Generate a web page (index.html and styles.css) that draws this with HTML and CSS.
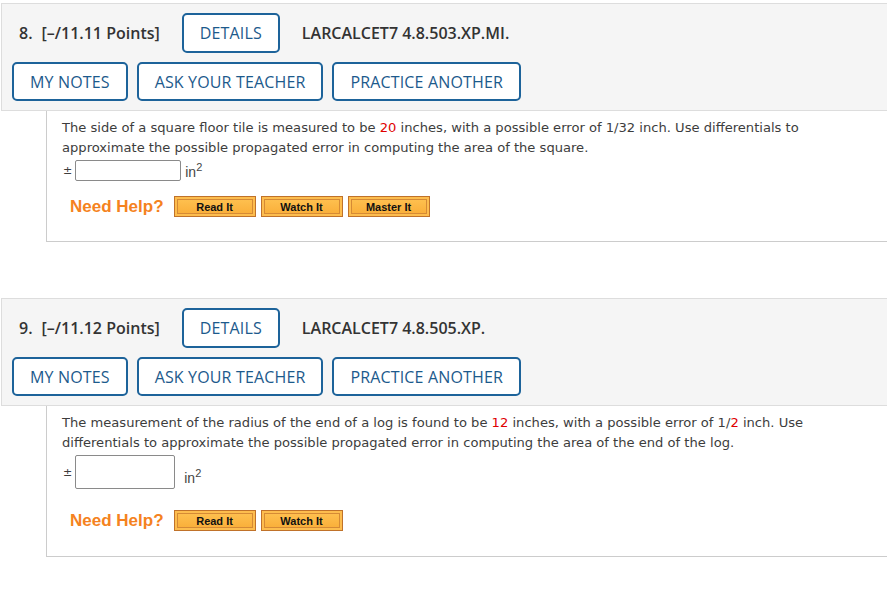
FILE: index.html
```html
<!DOCTYPE html>
<html lang="en">
<head>
  <meta charset="UTF-8">
  <title>Assignment Questions</title>
  <link rel="stylesheet" href="styles.css">
</head>
<body>

  <div class="question q8">
    <div class="q-header">
      <div class="q-row">
        <span class="q-num">8.</span>
        <span class="q-points">[–/11.11 Points]</span>
        <button class="btn">DETAILS</button>
        <span class="q-code">LARCALCET7 4.8.503.XP.MI.</span>
      </div>
      <div class="q-row">
        <button class="btn">MY NOTES</button>
        <button class="btn">ASK YOUR TEACHER</button>
        <button class="btn">PRACTICE ANOTHER</button>
      </div>
    </div>
    <div class="q-body">
      <p class="q-text">The side of a square floor tile is measured to be <span class="red">20</span> inches, with a possible error of 1/32 inch. Use differentials to approximate the possible propagated error in computing the area of the square.</p>
      <div class="answer">
        <span class="pm">±</span>
        <input type="text" class="ans-input">
        <span class="unit">in<sup>2</sup></span>
      </div>
      <div class="help">
        <span class="need-help">Need Help?</span>
        <button class="help-btn">Read It</button>
        <button class="help-btn">Watch It</button>
        <button class="help-btn">Master It</button>
      </div>
    </div>
  </div>

  <div class="question q9">
    <div class="q-header">
      <div class="q-row">
        <span class="q-num">9.</span>
        <span class="q-points">[–/11.12 Points]</span>
        <button class="btn">DETAILS</button>
        <span class="q-code">LARCALCET7 4.8.505.XP.</span>
      </div>
      <div class="q-row">
        <button class="btn">MY NOTES</button>
        <button class="btn">ASK YOUR TEACHER</button>
        <button class="btn">PRACTICE ANOTHER</button>
      </div>
    </div>
    <div class="q-body">
      <p class="q-text">The measurement of the radius of the end of a log is found to be <span class="red">12</span> inches, with a possible error of 1/<span class="red">2</span> inch. Use differentials to approximate the possible propagated error in computing the area of the end of the log.</p>
      <div class="answer tall">
        <span class="pm">±</span>
        <input type="text" class="ans-input">
        <span class="unit">in<sup>2</sup></span>
      </div>
      <div class="help">
        <span class="need-help">Need Help?</span>
        <button class="help-btn">Read It</button>
        <button class="help-btn">Watch It</button>
      </div>
    </div>
  </div>

</body>
</html>
```

FILE: styles.css
```css
body {
  margin: 0;
  padding-top: 3px;
  background: #fff;
  overflow: hidden;
  font-family: "Open Sans", Arial, sans-serif;
  color: #333;
}
.question {
  width: 1000px;
  margin-left: 1px;
}
.q9 {
  margin-top: 56px;
}
.q-header {
  background: #f5f5f5;
  border: 1px solid #ddd;
  padding: 9px 10px 9px 10px;
}
.q-row {
  display: flex;
  align-items: center;
}
.q-row + .q-row {
  margin-top: 9px;
}
.q-num {
  font-size: 16px;
  font-weight: 600;
  margin-left: 7px;
  margin-right: 9px;
}
.q-points {
  font-size: 16px;
  font-weight: 600;
  margin-right: 22px;
}
.q-code {
  font-size: 16px;
  font-weight: 600;
  margin-left: 22px;
}
.btn {
  font-family: "Open Sans", Arial, sans-serif;
  font-size: 16px;
  letter-spacing: 0.15px;
  color: #1c5a8c;
  background: #fff;
  border: 2px solid #1d639a;
  border-radius: 5px;
  height: 39px;
  padding: 0 16px;
  margin-right: 9px;
}
.q-row:first-child .btn {
  height: 40px;
  margin-right: 0;
}
.q-body {
  margin-left: 45px;
  border-left: 1px solid #ccc;
  border-bottom: 1px solid #ccc;
  padding: 7px 15px 24px 15px;
  font-family: "DejaVu Sans", Verdana, sans-serif;
  font-size: 13.1px;
  color: #3d3d3d;
}
.q9 .q-body {
  padding-bottom: 25px;
}
.q-text {
  margin: 0;
  line-height: 20px;
  width: 780px;
}
.red {
  color: #e00000;
}
.answer {
  display: flex;
  align-items: center;
  margin-top: 1px;
  height: 23px;
}
.pm {
  font-size: 11px;
  margin-left: 1px;
  margin-right: 3px;
}
.ans-input {
  width: 106px;
  height: 21px;
  box-sizing: border-box;
  border: 1px solid #8a8a8a;
  border-radius: 2px;
  margin: 0;
}
.unit {
  margin-left: 4px;
  font-family: Arial, "Liberation Sans", sans-serif;
  font-size: 14px;
  color: #444;
}
.unit sup {
  font-size: 11px;
}
.answer.tall {
  height: 36px;
  margin-top: 1px;
}
.answer.tall .ans-input {
  width: 100px;
  height: 34px;
}
.answer.tall .unit {
  margin-left: 9px;
  margin-top: 8px;
}
.help {
  display: flex;
  align-items: center;
  margin-top: 14px;
  padding-left: 8px;
}
.tall + .help {
  margin-top: 20px;
}
.need-help {
  font-family: Arial, "Liberation Sans", sans-serif;
  font-weight: bold;
  font-size: 17px;
  color: #f58220;
  margin-right: 10px;
}
.help-btn {
  font-family: Arial, "Liberation Sans", sans-serif;
  font-weight: bold;
  font-size: 11px;
  color: #111;
  width: 82px;
  height: 21px;
  padding: 0;
  margin-right: 5px;
  border: 1px solid #c0722a;
  background: linear-gradient(#ffc353, #f9ac36);
  box-shadow: inset 0 0 0 2px #fdbd4e, inset 0 0 0 3px #d58a35;
}
```
